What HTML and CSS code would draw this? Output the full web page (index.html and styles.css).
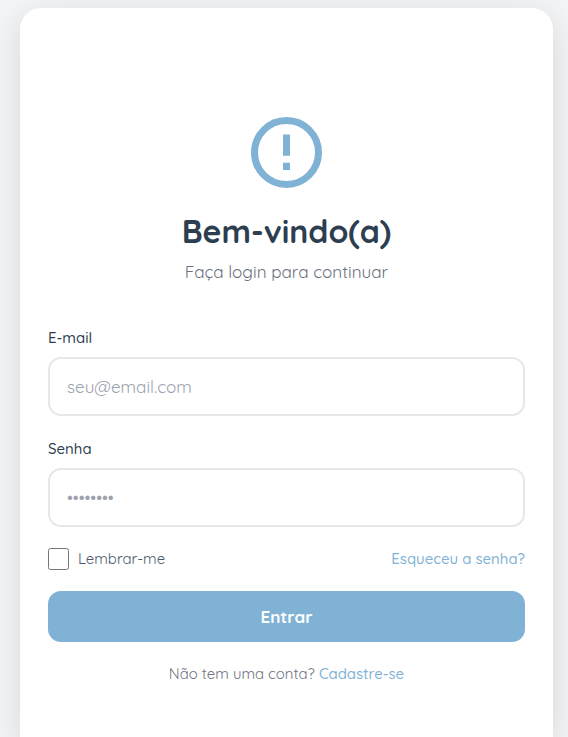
FILE: index.html
```html
<!DOCTYPE html>
<html lang="pt-BR">
<head>
<meta charset="utf-8">
<meta name="viewport" content="width=device-width, initial-scale=1">
<title>Login</title>
<link rel="stylesheet" href="styles.css">
</head>
<body>
<main class="card">
  <header class="header">
    <svg class="logo" viewBox="0 0 71 71" aria-hidden="true">
      <circle cx="35.5" cy="35.5" r="32" fill="none" stroke="currentColor" stroke-width="7"/>
      <path d="M32 17.4h7v21.3h-7zM32 45.8h7v7.1h-7z" fill="currentColor"/>
    </svg>
    <h1 class="title">Bem-vindo(a)</h1>
    <p class="subtitle">Faça login para continuar</p>
  </header>
  <form class="form">
    <label class="label label-email" for="email">E-mail</label>
    <input class="input" id="email" type="email" placeholder="seu@email.com">
    <label class="label label-password" for="password">Senha</label>
    <input class="input input-password" id="password" type="password" placeholder="••••••••">
    <div class="options">
      <label class="remember"><input class="checkbox" type="checkbox"><span>Lembrar-me</span></label>
      <a class="link forgot">Esqueceu a senha?</a>
    </div>
    <button class="submit" type="button"><span>Entrar</span></button>
  </form>
  <p class="signup"><span class="question">Não tem uma conta?</span> <a class="link register">Cadastre-se</a></p>
</main>
</body>
</html>
```
FILE: styles.css
```css
* { box-sizing: border-box; }
body {
  margin: 0;
  height: 737px;
  overflow: hidden;
  padding: 8px 15px 0 20.4px;
  background: #f3f4f6;
  font-family: Quicksand, Lato, sans-serif;
  color: #2c3e50;
}
.card {
  height: 729px;
  padding: 108.6px 28px 0 27.6px;
  border-radius: 21px 21px 0 0;
  background: #fff;
  box-shadow: 0 8px 32px rgba(0, 0, 0, .12);
}
.header { text-align: center; }
.logo { display: block; width: 71px; height: 71px; margin: 0 auto; color: #7fb2d5; }
.title { margin: 23.4px 0 0; font-size: 32px; line-height: 40px; font-weight: 700; white-space: nowrap; }
.subtitle { margin: 9px 0 0; font-size: 17.07px; line-height: 24px; font-weight: 400; color: #6b7280; }
.form { margin-top: 44px; }
.label { display: block; font-size: 14.93px; line-height: 20px; font-weight: 500; }
.input {
  display: block;
  width: 100%;
  height: 59px;
  margin-top: 9px;
  padding: 0 17px;
  border: 2px solid #e5e7eb;
  border-radius: 13px;
  background: #fff;
  font: 400 17.07px Quicksand, Lato, sans-serif;
}
.input::placeholder { color: #9ca3af; opacity: 1; }
.label-password { margin-top: 23px; }
.options { display: flex; align-items: center; justify-content: space-between; height: 22px; margin-top: 21px; font-size: 14.93px; line-height: 20px; }
.remember { display: flex; align-items: center; gap: 8.6px; font-weight: 400; color: #4b5a6b; }
.checkbox { appearance: none; width: 21.3px; height: 22px; margin: 0; border: 1px solid #767676; border-radius: 2.5px; background: #fff; }
.link { color: #7fb2d5; font-weight: 500; }
.submit {
  display: block;
  width: 100%;
  height: 51px;
  margin-top: 21px;
  border: 0;
  border-radius: 13px;
  background: #7fb2d5;
  color: #fff;
  font: 700 17.07px Quicksand, Lato, sans-serif;
}
.signup { margin: 22px 0 0; text-align: center; font-size: 14.93px; line-height: 20px; white-space: nowrap; }
.question { font-weight: 400; color: #6b7280; }
```
